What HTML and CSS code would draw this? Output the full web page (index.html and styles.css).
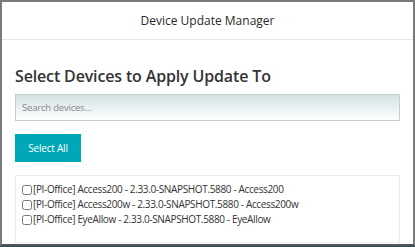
FILE: index.html
```html
<!DOCTYPE html>
<html lang="en">
<head>
    <meta charset="UTF-8">
    <title>Device Update Manager</title>
    <link rel="stylesheet" href="styles.css">
</head>
<body>
    <div class="modal">
        <div class="modal-header">Device Update Manager</div>
        <div class="modal-body">
            <h2 class="title">Select Devices to Apply Update To</h2>
            <input class="search" type="text" placeholder="Search devices...">
            <button class="btn">Select All</button>
            <div class="device-list">
                <label><input type="checkbox">[PI-Office] Access200 - 2.33.0-SNAPSHOT.5880 - Access200</label>
                <label><input type="checkbox">[PI-Office] Access200w - 2.33.0-SNAPSHOT.5880 - Access200w</label>
                <label><input type="checkbox">[PI-Office] EyeAllow - 2.33.0-SNAPSHOT.5880 - EyeAllow</label>
            </div>
        </div>
    </div>
</body>
</html>
```

FILE: styles.css
```css
*{
    padding: 0;
    margin: 0;
    box-sizing: border-box;
}
body{
    width: 415px;
    height: 247px;
    background: #2f4f52;
    font-family: "Open Sans", "Noto Sans", sans-serif;
    color: #333;
    overflow: hidden;
}
.modal{
    width: 415px;
    height: 246px;
    background: #fff;
    border: 2px solid #7a7a7a;
    border-bottom-color: #555;
}
.modal-header{
    height: 38px;
    line-height: 37px;
    text-align: center;
    font-size: 12px;
    color: #2a2a2a;
    border-bottom: 1px solid #e8e8e8;
}
.modal-body{
    padding: 25px 13px 0 13px;
    display: flex;
    flex-direction: column;
    align-items: flex-start;
}
.title{
    font-size: 16px;
    font-weight: 600;
    line-height: 22px;
    letter-spacing: -0.15px;
    color: #333;
}
.search{
    width: 100%;
    height: 27px;
    margin-top: 7px;
    padding: 0 6px;
    border: 1px solid #ccc;
    background: linear-gradient(#d3e2e3, #fff);
    font-family: inherit;
    font-size: 9.5px;
    letter-spacing: -0.2px;
    color: #333;
    outline: none;
}
.search::placeholder{
    color: #888;
}
.btn{
    margin-top: 13px;
    width: 66px;
    height: 28px;
    border: none;
    background: #00a7b6;
    color: #fff;
    font-family: inherit;
    font-size: 10px;
    letter-spacing: -0.2px;
}
.device-list{
    width: 100%;
    margin-top: 13px;
    height: 68px;
    border: 1px solid #ebebeb;
    padding: 6px 6px;
    display: flex;
    flex-direction: column;
}
.device-list label{
    font-size: 10px;
    letter-spacing: -0.35px;
    line-height: 15px;
    display: flex;
    align-items: center;
    white-space: nowrap;
}
.device-list input{
    width: 10px;
    height: 10px;
    margin: 0 1px 0 0;
}
```
